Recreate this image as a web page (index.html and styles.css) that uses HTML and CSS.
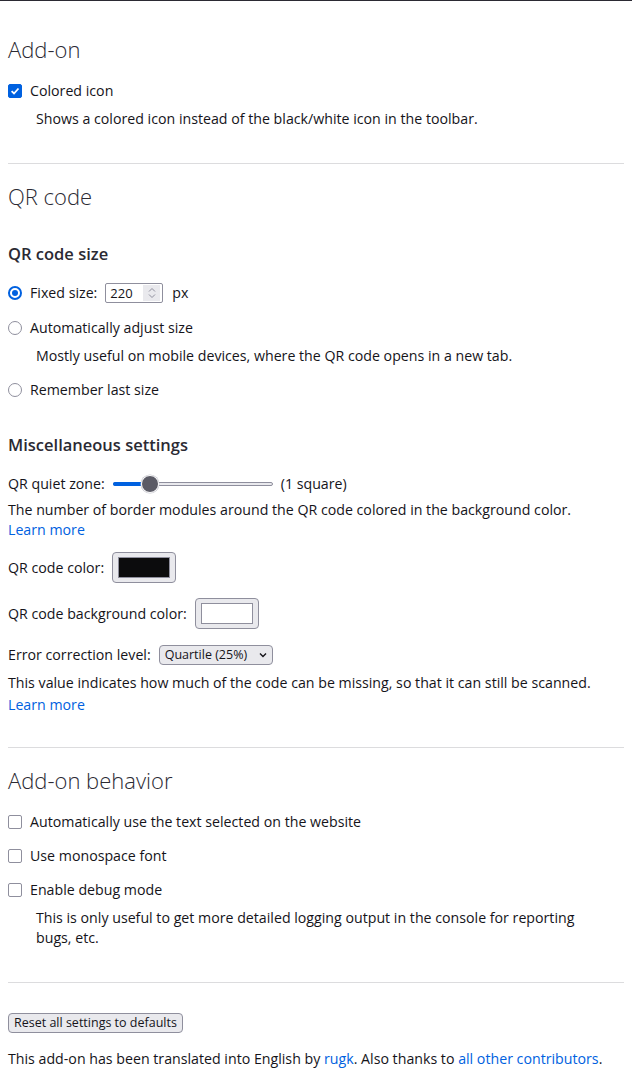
FILE: index.html
```html
<!DOCTYPE html>
<html lang="en">
<head>
<meta charset="utf-8">
<title>Options</title>
<link rel="stylesheet" href="styles.css">
</head>
<body>
<main class="page">
  <section class="section s1">
    <h1 class="title">Add-on</h1>
    <div class="opt">
      <span class="box checked"><svg width="10" height="10" viewBox="0 0 10 10"><path d="M1.6 5.2 L4 7.5 L8.5 2.5" fill="none" stroke="#fff" stroke-width="1.8"/></svg></span>
      <span>Colored icon</span>
    </div>
    <p class="desc">Shows a colored icon instead of the black/white icon in the toolbar.</p>
  </section>

  <section class="section s2">
    <h1 class="title">QR code</h1>
    <h2 class="sub">QR code size</h2>
    <div class="opt opt-size">
      <span class="radio on"><span class="dot"></span></span>
      <span>Fixed size:</span>
      <span class="num"><span class="num-val">220</span><span class="spin"><svg width="10" height="14" viewBox="0 0 10 14"><path d="M2 5.5 L5 2.5 L8 5.5 M2 8.5 L5 11.5 L8 8.5" fill="none" stroke="#8f8f9d" stroke-width="1"/></svg></span></span>
      <span class="unit">px</span>
    </div>
    <div class="opt opt-auto">
      <span class="radio"></span>
      <span>Automatically adjust size</span>
    </div>
    <p class="desc">Mostly useful on mobile devices, where the QR code opens in a new tab.</p>
    <div class="opt opt-remember">
      <span class="radio"></span>
      <span>Remember last size</span>
    </div>

    <h2 class="sub sub-misc">Miscellaneous settings</h2>
    <div class="line quiet">
      <span>QR quiet zone:</span>
      <span class="slider"><span class="fill"></span><span class="thumb"></span></span>
      <span>(1 square)</span>
    </div>
    <p class="text">The number of border modules around the QR code colored in the background color.<br><a href="#">Learn more</a></p>
    <div class="line color-row">
      <span>QR code color:</span>
      <span class="swatch-btn"><span class="swatch dark"></span></span>
    </div>
    <div class="line color-row2">
      <span>QR code background color:</span>
      <span class="swatch-btn"><span class="swatch light"></span></span>
    </div>
    <div class="line ecl">
      <span>Error correction level:</span>
      <span class="select"><span class="sel-text">Quartile (25%)</span><svg width="10" height="8" viewBox="0 0 10 8"><path d="M2 2.5 L5 5.5 L8 2.5" fill="none" stroke="#15141a" stroke-width="1.4"/></svg></span>
    </div>
    <p class="text t2">This value indicates how much of the code can be missing, so that it can still be scanned.</p>
    <p class="lm"><a href="#">Learn more</a></p>
  </section>

  <section class="section s3">
    <h1 class="title">Add-on behavior</h1>
    <div class="opt">
      <span class="box"></span>
      <span>Automatically use the text selected on the website</span>
    </div>
    <div class="opt opt-gap">
      <span class="box"></span>
      <span>Use monospace font</span>
    </div>
    <div class="opt opt-gap">
      <span class="box"></span>
      <span>Enable debug mode</span>
    </div>
    <p class="desc desc-wrap">This is only useful to get more detailed logging output in the console for reporting bugs, etc.</p>
  </section>

  <footer class="foot">
    <span class="btn">Reset all settings to defaults</span>
    <p class="credits">This add-on has been translated into English by <a href="#">rugk</a>. Also thanks to <a href="#">all other contributors</a>.</p>
  </footer>
</main>
</body>
</html>
```
FILE: styles.css
```css
html, body {
  margin: 0;
  padding: 0;
  background: #fff;
}
body {
  border-top: 1px solid #2b2a33;
  font-family: "Open Sans", "Noto Sans", sans-serif;
  font-size: 14.2px;
  line-height: 20px;
  color: #15141a;
}
.page {
  padding: 0 8px;
}
a {
  color: #0061e0;
  text-decoration: none;
}
p { margin: 0; }
.section {
  border-bottom: 1px solid #dcdcde;
}
.s1 { padding-bottom: 34px; }
.s2 { padding-bottom: 32px; }
.s3 { padding-bottom: 34px; }
.title {
  margin: 17px 0 0;
  font-size: 22px;
  line-height: 30px;
  font-weight: 300;
  color: #2b2a33;
}
.s1 .title { margin-top: 33px; }
.sub {
  margin: 31px 0 0;
  font-size: 16.5px;
  line-height: 24px;
  font-weight: 600;
  color: #2b2a33;
}
.sub-misc { margin-top: 33px; }
.opt {
  display: flex;
  align-items: center;
  gap: 8px;
  height: 20px;
  margin-top: 17px;
}
.opt-auto { margin-top: 15px; }
.opt-remember { margin-top: 14px; }
.opt-gap { margin-top: 14px; }
.desc {
  margin-top: 8px;
  padding-left: 28px;
}
.desc-wrap { padding-right: 30px; }
.box {
  width: 14px;
  height: 14px;
  box-sizing: border-box;
  border: 1.5px solid #8f8f9d;
  border-radius: 2px;
  display: inline-flex;
  align-items: center;
  justify-content: center;
  flex: none;
}
.box.checked {
  background: #0061e0;
  border-color: #0061e0;
}
.radio {
  width: 14px;
  height: 14px;
  box-sizing: border-box;
  border: 1.5px solid #8f8f9d;
  border-radius: 50%;
  display: inline-flex;
  align-items: center;
  justify-content: center;
  flex: none;
}
.radio.on {
  border: 2px solid #0061e0;
}
.radio .dot {
  width: 6px;
  height: 6px;
  border-radius: 50%;
  background: #0061e0;
}
.num {
  display: inline-flex;
  align-items: center;
  justify-content: space-between;
  width: 58px;
  height: 20px;
  box-sizing: border-box;
  border: 1px solid #8f8f9d;
  border-radius: 2px;
  padding: 0 2px 0 4px;
  font-size: 13px;
}
.spin {
  display: inline-flex;
  align-items: center;
  justify-content: center;
  width: 17px;
  height: 16px;
  background: #e9e9ed;
}
.unit { margin-left: 1px; }
.line {
  display: flex;
  align-items: center;
  gap: 8px;
}
.quiet {
  margin-top: 17px;
  height: 20px;
}
.slider {
  position: relative;
  width: 160px;
  height: 20px;
  display: inline-block;
}
.slider::before {
  content: "";
  position: absolute;
  left: 0;
  right: 0;
  top: 8px;
  height: 4px;
  box-sizing: border-box;
  border: 1px solid #8f8f9d;
  border-radius: 2px;
  background: #e9e9ed;
}
.fill {
  position: absolute;
  left: 0;
  top: 8px;
  width: 38px;
  height: 4px;
  background: #0061e0;
  border-radius: 2px;
}
.thumb {
  position: absolute;
  left: 28px;
  top: 1px;
  width: 18px;
  height: 18px;
  box-sizing: border-box;
  border-radius: 50%;
  background: #5b5b66;
  border: 1.5px solid #fff;
  box-shadow: 0 0 0 0.5px #c8c8d0;
}
.text {
  margin-top: 6px;
}
.color-row {
  margin-top: 12px;
  height: 31px;
}
.color-row2 {
  margin-top: 15px;
  height: 31px;
}
.swatch-btn {
  display: inline-flex;
  align-items: center;
  justify-content: center;
  width: 64px;
  height: 31px;
  box-sizing: border-box;
  border: 1px solid #8f8f9d;
  border-radius: 4px;
  background: #e9e9ed;
}
.swatch {
  width: 52px;
  height: 21px;
  box-sizing: border-box;
  border: 1px solid #8f8f9d;
}
.swatch.dark { background: #0c0c0d; }
.swatch.light { background: #fff; }
.ecl {
  margin-top: 16px;
  height: 20px;
}
.select {
  display: inline-flex;
  align-items: center;
  justify-content: space-between;
  height: 20px;
  width: 114px;
  box-sizing: border-box;
  border: 1px solid #8f8f9d;
  border-radius: 4px;
  background: #e9e9ed;
  padding: 0 4px 0 5px;
  font-size: 12.5px;
  white-space: nowrap;
}
.t2 { margin-top: 8px; }
.lm { margin-top: 2px; }
.foot {
  padding-top: 29px;
}
.btn {
  display: inline-flex;
  align-items: center;
  height: 20px;
  box-sizing: border-box;
  padding: 0 5px;
  border: 1px solid #8f8f9d;
  border-radius: 4px;
  background: #e9e9ed;
  font-size: 12.5px;
  white-space: nowrap;
}
.credits {
  margin-top: 16px;
}
```
